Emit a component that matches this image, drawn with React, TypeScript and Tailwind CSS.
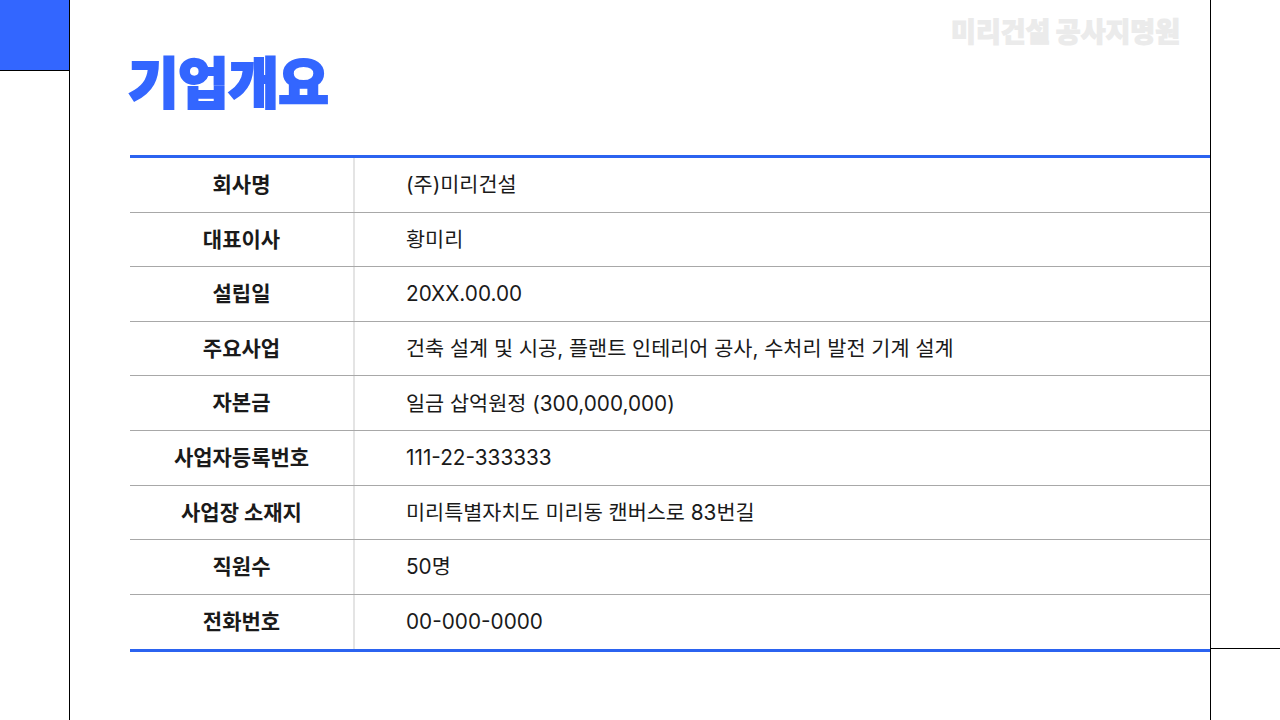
const rows: [string, string][] = [
  ['회사명', '(주)미리건설'],
  ['대표이사', '황미리'],
  ['설립일', '20XX.00.00'],
  ['주요사업', '건축 설계 및 시공, 플랜트 인테리어 공사, 수처리 발전 기계 설계'],
  ['자본금', '일금 삽억원정 (300,000,000)'],
  ['사업자등록번호', '111-22-333333'],
  ['사업장 소재지', '미리특별자치도 미리동 캔버스로 83번길'],
  ['직원수', '50명'],
  ['전화번호', '00-000-0000'],
];

const font = { fontFamily: 'Inter, "Noto Sans CJK KR", "Noto Sans", sans-serif' };

export default function App() {
  return (
    <div className="flex h-[720px] w-[1280px] bg-white overflow-hidden" style={font}>
      {/* left rail */}
      <div className="w-[70px] shrink-0 border-r border-black">
        <div className="h-[71px] bg-[#3366ff] border-b border-black" />
      </div>

      {/* content */}
      <div className="flex-1 flex flex-col pl-[60px]">
        <div className="h-[155px] flex flex-col">
          <div className="self-end mr-[30px] mt-[15px] text-[27px] leading-[35px] font-black text-[#ebebeb] [-webkit-text-stroke:1px_#ebebeb]">
            미리건설 공사지명원
          </div>
          <h1 className="-ml-[2px] mt-[2px] text-[55px] leading-[62px] font-black text-[#3366ff] tracking-[-0.5px] [-webkit-text-stroke:2px_#3366ff]">
            기업개요
          </h1>
        </div>

        <div className="border-t-[3px] border-b-[3px] border-[#2b63f0]">
          {rows.map(([label, value], i) => (
            <div
              key={label}
              className={`flex h-[54.6px] ${i < rows.length - 1 ? 'border-b border-[#a8a8a8]' : ''}`}
            >
              <div className="w-[225px] shrink-0 flex items-center justify-center border-r-2 border-[#e4e4e4] text-[21px] font-bold text-[#1a1a1a]">
                {label}
              </div>
              <div className="flex-1 flex items-center pl-[51px] text-[20.75px] text-[#1a1a1a]">
                {value}
              </div>
            </div>
          ))}
        </div>
      </div>

      {/* right rail */}
      <div className="w-[70px] shrink-0 border-l border-black">
        <div className="h-[649px] border-b border-black" />
      </div>
    </div>
  );
}
